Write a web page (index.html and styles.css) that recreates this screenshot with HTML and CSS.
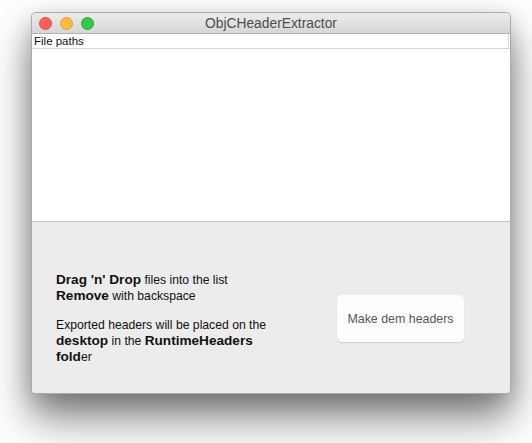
FILE: index.html
```html
<!DOCTYPE html>
<html>
<head>
<meta charset="utf-8">
<title>ObjCHeaderExtractor</title>
<link rel="stylesheet" href="styles.css">
</head>
<body>
<div class="window">
  <div class="titlebar">
    <div class="lights">
      <span class="light red"></span>
      <span class="light yellow"></span>
      <span class="light green"></span>
    </div>
    <div class="title">ObjCHeaderExtractor</div>
  </div>
  <div class="table-header">
    <span class="col-title">File paths</span>
    <span class="col-divider"></span>
  </div>
  <div class="list"></div>
  <div class="bottom">
    <div class="info">
      <p class="para"><b>Drag 'n' Drop</b> files into the list<br><b>Remove</b> with backspace</p>
      <p class="para">Exported headers will be placed on the <b>desktop</b> in the <b>RuntimeHeaders</b> <b>fold</b>er</p>
    </div>
    <div class="button">Make dem headers</div>
  </div>
</div>
</body>
</html>
```
FILE: styles.css
```css
html, body {
  margin: 0;
  padding: 0;
  background: #ffffff;
  height: 100%;
}
body {
  box-sizing: border-box;
  min-height: 443px;
  padding: 12px 0 0 31px;
  font-family: "Liberation Sans", Arial, sans-serif;
  overflow: hidden;
}
.window {
  width: 478px;
  border: 1px solid rgba(0,0,0,0.28);
  border-radius: 5px 5px 4px 4px;
  overflow: hidden;
  box-shadow: 0 24px 42px rgba(0,0,0,0.5), 0 6px 22px rgba(0,0,0,0.16);
  background: #ececec;
}
.titlebar {
  height: 20px;
  border-bottom: 1px solid #b3b3b3;
  background: linear-gradient(#ececec, #d6d6d6);
  display: flex;
  align-items: center;
}
.lights {
  display: flex;
  gap: 8px;
  padding-left: 7px;
}
.light {
  width: 11px;
  height: 11px;
  border-radius: 50%;
  display: block;
}
.red { background: #fc605c; border: 0.5px solid #e14942; }
.yellow { background: #fdbc40; border: 0.5px solid #df9e2e; }
.green { background: #34c84a; border: 0.5px solid #27a93a; }
.title {
  flex: 1;
  text-align: center;
  font-size: 13.8px;
  color: #4d4d4d;
  margin-left: -62px;
}
.table-header {
  height: 14px;
  background: #ffffff;
  border-bottom: 1px solid #d4d4d4;
  display: flex;
  align-items: center;
  justify-content: space-between;
  padding-left: 2px;
}
.col-title {
  font-size: 11.5px;
  color: #111;
  line-height: 14px;
}
.col-divider {
  width: 1px;
  height: 12px;
  background: #d8d8d8;
  margin-right: 1px;
}
.list {
  height: 172px;
  background: #ffffff;
  border-bottom: 1px solid #c3c3c3;
}
.bottom {
  height: 149px;
  padding: 22px 46px 0 24px;
  display: flex;
  align-items: center;
  justify-content: space-between;
  background: #ececec;
}
.info {
  width: 214px;
}
.para {
  margin: 0;
  font-size: 12.2px;
  line-height: 16px;
  color: #111;
}
.para + .para {
  margin-top: 13px;
}
.para b {
  font-size: 13.6px;
  font-weight: bold;
}
.button {
  width: 127px;
  height: 47px;
  background: #fdfdfd;
  border-radius: 5px;
  box-shadow: 0 1px 1px rgba(0,0,0,0.13);
  display: flex;
  align-items: center;
  justify-content: center;
  font-size: 12.4px;
  color: #545860;
}
```
